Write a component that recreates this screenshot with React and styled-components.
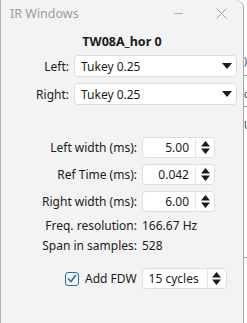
import React from "react";
import styled, { createGlobalStyle } from "styled-components";

const Global = createGlobalStyle`
  html, body {
    margin: 0;
    padding: 0;
    background: #ffffff;
    width: 247px;
    height: 323px;
    overflow: hidden;
  }
  * { box-sizing: border-box; }
`;

const Screen = styled.div`
  display: flex;
  width: 247px;
  height: 323px;
  font-family: "Segoe UI", "Noto Sans", "Open Sans", sans-serif;
  font-size: 12px;
  color: #1b1b1b;
`;

const Window = styled.div`
  width: 244px;
  height: 323px;
  background: #f3f3f3;
  border-left: 1px solid #b5b5b5;
  border-right: 1px solid #a9a9a9;
  border-top-right-radius: 8px;
  display: flex;
  flex-direction: column;
`;

const TitleBar = styled.div`
  height: 27px;
  display: flex;
  align-items: center;
  padding-left: 9px;
  color: #9c9c9c;
  font-size: 12.5px;
`;

const TitleText = styled.span`
  flex: 1;
`;

const Minimize = styled.span`
  width: 9px;
  height: 1px;
  background: #b0b0b0;
  margin-right: 33px;
`;

const Close = styled.svg`
  width: 11px;
  height: 11px;
  margin-right: 16px;
`;

const Body = styled.div`
  display: flex;
  flex-direction: column;
`;

const Heading = styled.div`
  font-weight: bold;
  text-align: center;
  font-size: 12.5px;
  margin-top: 6px;
  height: 18px;
  line-height: 18px;
`;

const WindowGrid = styled.div`
  display: grid;
  grid-template-columns: 68px 163px;
  column-gap: 5px;
  row-gap: 6px;
  margin-top: 4px;
  align-items: center;
`;

const Label = styled.span`
  text-align: right;
  white-space: nowrap;
`;

const Field = styled.div`
  height: ${(p) => p.$h || 22}px;
  background: #ffffff;
  border: 1px solid #dedede;
  border-radius: 4px;
  display: flex;
  align-items: center;
`;

const FieldText = styled.span`
  flex: 1;
  padding: 0 6px;
  text-align: ${(p) => (p.$right ? "right" : "left")};
  white-space: nowrap;
`;

const ArrowBox = styled.div`
  width: 19px;
  align-self: stretch;
  display: flex;
  align-items: center;
  justify-content: center;
  border-left: ${(p) => (p.$split ? "1px solid #e6e6e6" : "none")};
`;

const SpinGrid = styled.div`
  display: grid;
  grid-template-columns: 136px 73px;
  column-gap: 5px;
  row-gap: 6px;
  margin-top: 32px;
  align-items: center;
`;

const InfoGrid = styled.div`
  display: grid;
  grid-template-columns: 136px auto;
  column-gap: 5px;
  row-gap: 4px;
  margin-top: 6px;
  line-height: 16px;
`;

const FdwRow = styled.div`
  display: flex;
  align-items: center;
  margin-top: 14px;
  padding-left: 64px;
`;

const Check = styled.span`
  width: 14px;
  height: 14px;
  border: 1px solid #2f6f9f;
  border-radius: 3px;
  display: flex;
  align-items: center;
  justify-content: center;
  margin-right: 6px;
`;

const FdwField = styled(Field)`
  width: 85px;
  margin-left: 5px;
`;

const Backdrop = styled.div`
  flex: 1;
  display: flex;
  flex-direction: column;
  padding-top: 55px;
  font-size: 12px;
  color: #333;
  overflow: hidden;
`;

const Rule = styled.div`
  height: 1px;
  background: #9a9a9a;
  margin-top: ${(p) => p.$m}px;
`;

const Frag = styled.span`
  margin-top: ${(p) => p.$m}px;
  line-height: 12px;
  font-size: 10px;
  padding-left: 0;
`;

function Down() {
  return (
    <svg width="10" height="6" viewBox="0 0 10 6">
      <path d="M0 0h10L5 6z" fill="#1b1b1b" />
    </svg>
  );
}

function UpDown() {
  return (
    <svg width="9" height="13" viewBox="0 0 9 13">
      <path d="M0 5.5L4.5 0L9 5.5z M0 7.5h9L4.5 13z" fill="#1b1b1b" />
    </svg>
  );
}

function Combo({ value }) {
  return (
    <Field>
      <FieldText>{value}</FieldText>
      <ArrowBox>
        <Down />
      </ArrowBox>
    </Field>
  );
}

function Spin({ value }) {
  return (
    <Field $h={21}>
      <FieldText $right>{value}</FieldText>
      <ArrowBox $split>
        <UpDown />
      </ArrowBox>
    </Field>
  );
}

export default function App() {
  return (
    <Screen>
      <Global />
      <Window>
        <TitleBar>
          <TitleText>IR Windows</TitleText>
          <Minimize />
          <Close viewBox="0 0 11 11">
            <path d="M0.5 0.5L10.5 10.5M10.5 0.5L0.5 10.5" stroke="#a0a0a0" strokeWidth="1" />
          </Close>
        </TitleBar>
        <Body>
          <Heading>TW08A_hor 0</Heading>
          <WindowGrid>
            <Label>Left:</Label>
            <Combo value="Tukey 0.25" />
            <Label>Right:</Label>
            <Combo value="Tukey 0.25" />
          </WindowGrid>
          <SpinGrid>
            <Label>Left width (ms):</Label>
            <Spin value="5.00" />
            <Label>Ref Time (ms):</Label>
            <Spin value="0.042" />
            <Label>Right width (ms):</Label>
            <Spin value="6.00" />
          </SpinGrid>
          <InfoGrid>
            <Label>Freq. resolution:</Label>
            <span>166.67 Hz</span>
            <Label>Span in samples:</Label>
            <span>528</span>
          </InfoGrid>
          <FdwRow>
            <Check>
              <svg width="10" height="9" viewBox="0 0 10 9">
                <path d="M1 4.5L4 7.5L9 1" stroke="#2f6f9f" strokeWidth="1.5" fill="none" />
              </svg>
            </Check>
            <span>Add FDW</span>
            <FdwField $h={21}>
              <FieldText>15 cycles</FieldText>
              <ArrowBox $split>
                <UpDown />
              </ArrowBox>
            </FdwField>
          </FdwRow>
        </Body>
      </Window>
      <Backdrop>
        <Frag $m={0}>)</Frag>
        <Rule $m={8} />
        <Frag $m={12}>c</Frag>
        <Rule $m={6} />
        <Frag $m={12}>U</Frag>
        <Rule $m={126} />
      </Backdrop>
    </Screen>
  );
}
